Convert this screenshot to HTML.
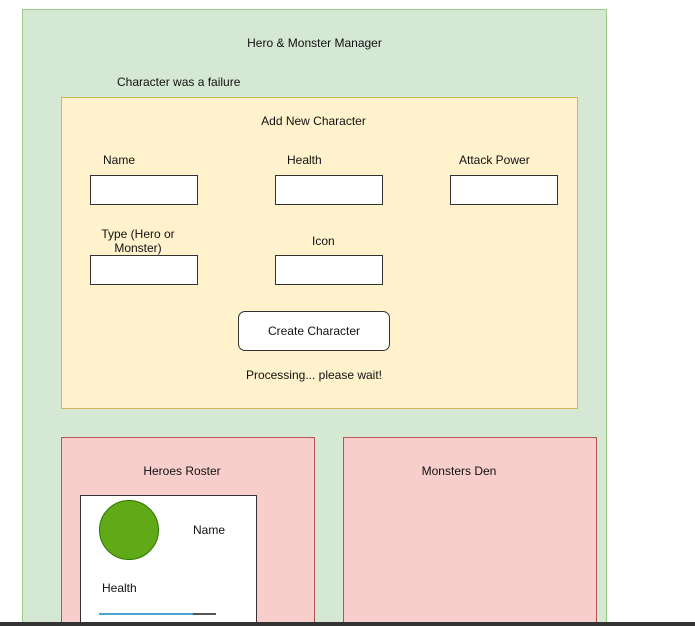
<!DOCTYPE html><html style="height:626px;overflow:hidden"><head><style>
body{margin:0;width:695px;height:626px;background:#fff;position:relative;overflow:hidden;font-family:"Liberation Sans",sans-serif;font-size:12px;color:#111}
div{position:absolute;box-sizing:border-box}
.t{white-space:nowrap;text-align:center}
.in{background:#fff;border:1px solid #333}
</style></head><body>
<div style="left:22px;top:9px;width:585px;height:617px;background:#d5e8d4;border:1px solid #9fcb8a;border-bottom:none"></div>
<div class="t" style="left:22px;top:36px;width:585px">Hero &amp; Monster Manager</div>
<div class="t" style="left:117px;top:75px">Character was a failure</div>
<div style="left:61px;top:97px;width:517px;height:312px;background:#fff2cc;border:1px solid #d6b656"></div>
<div class="t" style="left:61px;top:114px;width:505px">Add New Character</div>
<div class="t" style="left:103px;top:153px">Name</div>
<div class="t" style="left:287px;top:153px">Health</div>
<div class="t" style="left:459px;top:153px">Attack Power</div>
<div class="in" style="left:90px;top:175px;width:108px;height:30px"></div>
<div class="in" style="left:275px;top:175px;width:108px;height:30px"></div>
<div class="in" style="left:450px;top:175px;width:108px;height:30px"></div>
<div class="t" style="left:88px;top:227px;width:100px;white-space:normal;line-height:14px">Type (Hero or Monster)</div>
<div class="t" style="left:312px;top:234px">Icon</div>
<div class="in" style="left:90px;top:255px;width:108px;height:30px"></div>
<div class="in" style="left:275px;top:255px;width:108px;height:30px"></div>
<div class="in t" style="left:238px;top:311px;width:152px;height:40px;border-radius:7px;line-height:38px">Create Character</div>
<div class="t" style="left:238px;top:368px;width:152px">Processing... please wait!</div>
<div style="left:61px;top:437px;width:254px;height:189px;background:#f8cecc;border:1px solid #b85450;border-bottom:none"></div>
<div style="left:343px;top:437px;width:254px;height:189px;background:#f8cecc;border:1px solid #b85450;border-bottom:none"></div>
<div class="t" style="left:61px;top:464px;width:242px">Heroes Roster</div>
<div class="t" style="left:343px;top:464px;width:232px">Monsters Den</div>
<div style="left:80px;top:495px;width:177px;height:131px;background:#fff;border:1px solid #333;border-bottom:none"></div>
<div style="left:99px;top:500px;width:60px;height:60px;border-radius:50%;background:#60a917;border:1px solid #2d7600"></div>
<div class="t" style="left:193px;top:523px">Name</div>
<div class="t" style="left:102px;top:581px">Health</div>
<div style="left:99px;top:613px;width:117px;height:2px;background:#555"></div>
<div style="left:99px;top:613px;width:94px;height:2px;background:#4aa3d0"></div>
<div style="left:0;top:622px;width:695px;height:4px;background:#333"></div>
</body></html>
